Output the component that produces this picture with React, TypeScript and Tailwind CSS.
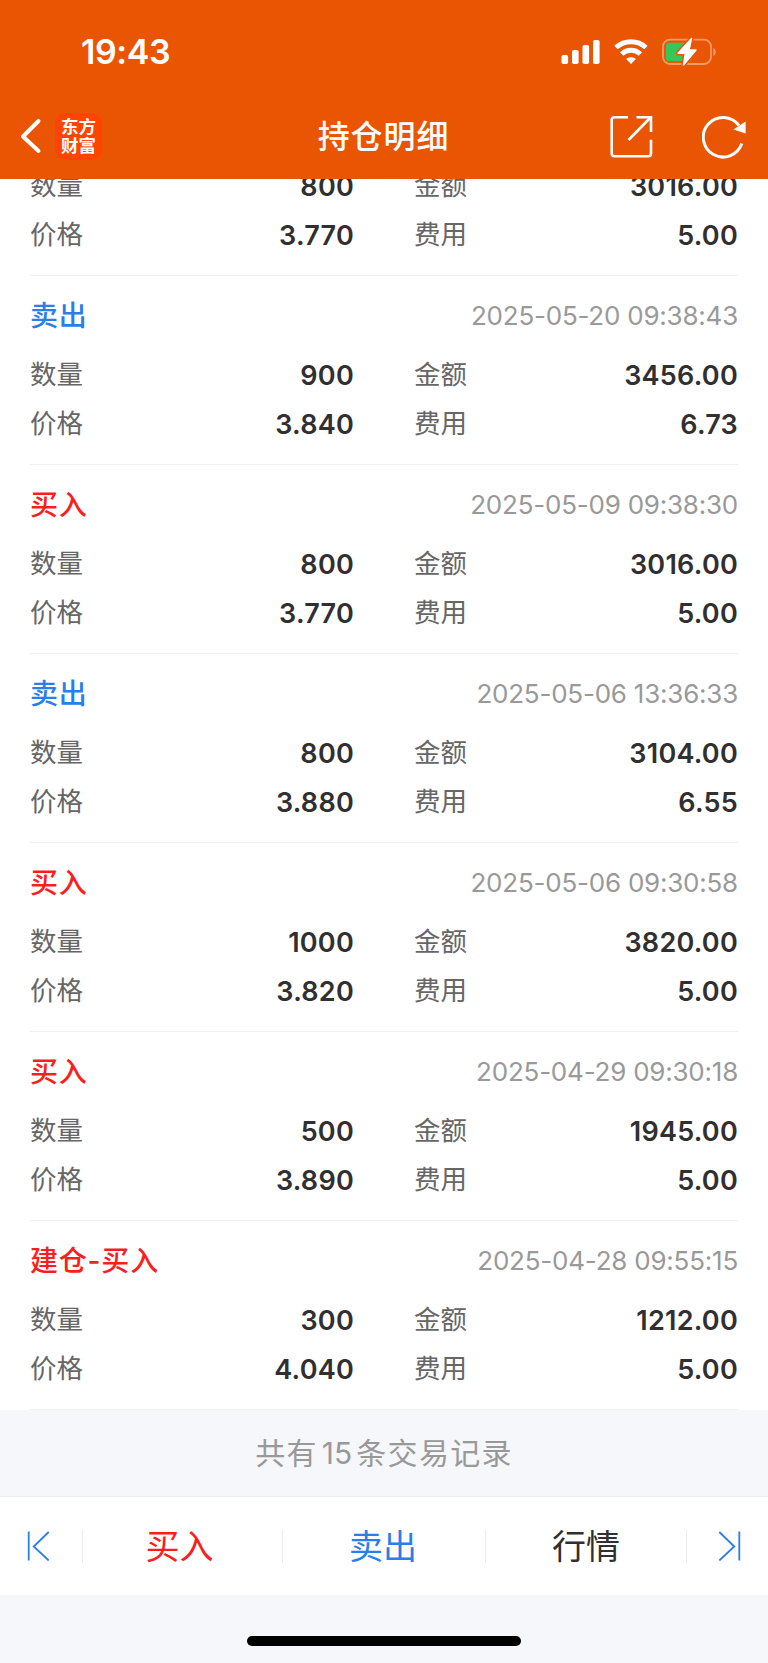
import React from "react";

type TradeRecord = {
  type: string;
  side: "buy" | "sell";
  time: string;
  quantity: string;
  amount: string;
  price: string;
  fee: string;
};

const records: TradeRecord[] = [
  { type: "卖出", side: "sell", time: "2025-05-20 09:38:43", quantity: "900", amount: "3456.00", price: "3.840", fee: "6.73" },
  { type: "买入", side: "buy", time: "2025-05-09 09:38:30", quantity: "800", amount: "3016.00", price: "3.770", fee: "5.00" },
  { type: "卖出", side: "sell", time: "2025-05-06 13:36:33", quantity: "800", amount: "3104.00", price: "3.880", fee: "6.55" },
  { type: "买入", side: "buy", time: "2025-05-06 09:30:58", quantity: "1000", amount: "3820.00", price: "3.820", fee: "5.00" },
  { type: "买入", side: "buy", time: "2025-04-29 09:30:18", quantity: "500", amount: "1945.00", price: "3.890", fee: "5.00" },
  { type: "建仓-买入", side: "buy", time: "2025-04-28 09:55:15", quantity: "300", amount: "1212.00", price: "4.040", fee: "5.00" },
];

function StatusBar() {
  return (
    <div className="flex h-[102px] items-center justify-between pl-[81px] pr-[51px] pt-px">
      <span className="pt-px text-[34px] font-semibold leading-none tracking-[-0.4px]">19:43</span>
      <div className="flex items-center">
        <svg width="39" height="26" viewBox="0 0 39 26" fill="#fff">
          <rect x="0.5" y="16" width="6.6" height="9" rx="1.8" />
          <rect x="11" y="11" width="6.6" height="14" rx="1.8" />
          <rect x="21.5" y="6" width="6.6" height="19" rx="1.8" />
          <rect x="32" y="1" width="6.6" height="24" rx="1.8" />
        </svg>
        <svg className="ml-[14px]" width="34" height="26" viewBox="0 0 34 26" fill="none" stroke="#fff">
          <path d="M2 8.6C10.4 0.8 23.6 0.8 32 8.6" strokeWidth="4.8" />
          <path d="M7.6 15C13 10 21 10 26.4 15" strokeWidth="4.8" />
          <path d="M17 25L12.1 20.1C14.8 17.6 19.2 17.6 21.9 20.1Z" fill="#fff" stroke="none" />
        </svg>
        <svg className="ml-[13px] overflow-visible" width="56" height="28" viewBox="0 0 56 28" fill="none">
          <rect x="2" y="1.6" width="48" height="24.4" rx="7" stroke="#f49b68" strokeWidth="1.8" />
          <path d="M52.3 10C55.5 11.2 55.5 16.8 52.3 18Z" fill="#f49b68" />
          <rect x="4.8" y="4.8" width="26" height="18.2" rx="3.5" fill="#34c759" />
          <path
            d="M30.5 0.5L17 15.2H24.3L22.5 27L35 12H28Z"
            fill="#ea5504"
            stroke="#ea5504"
            strokeWidth="4.4"
            strokeLinejoin="round"
          />
          <path d="M30.5 0.5L17 15.2H24.3L22.5 27L35 12H28Z" fill="#fff" stroke="#fff" strokeWidth="1.4" strokeLinejoin="round" />
        </svg>
      </div>
    </div>
  );
}

function NavBar() {
  return (
    <div className="flex h-[77px] items-center pb-[11px] pl-5 pr-[21px]">
      <div className="flex flex-1 items-center pt-[2px]">
        <svg width="22" height="36" viewBox="0 0 22 36" fill="none" stroke="#fff" strokeWidth="4" strokeLinecap="round" strokeLinejoin="round">
          <path d="M18.5 3L3 18.5L18.5 33" />
        </svg>
        <div className="ml-[13px] flex h-[47px] w-[47px] flex-col items-center justify-center rounded-[10px] bg-[#ff4400] text-[17.5px] font-bold leading-[19px]">
          <span>东方</span>
          <span>财富</span>
        </div>
      </div>
      <h1 className="pt-1 text-[32px] font-medium leading-none tracking-[0.9px]">持仓明细</h1>
      <div className="flex flex-1 items-center justify-end pt-[3px]">
        <svg width="44" height="44" viewBox="0 0 44 44" fill="none" stroke="#fff" strokeWidth="2.6">
          <path d="M18 2.2H4.5Q1.7 2.2 1.7 4.7V38.5Q1.7 41.2 4.5 41.2H38.5Q41 41.2 41 38.5V24.8" />
          <path d="M26.5 2.2H41V17" />
          <path d="M40.5 2.5L18.5 25" />
        </svg>
        <svg className="ml-[48px]" width="45" height="44" viewBox="0 0 45 44" fill="none">
          <path d="M39.8 28.6A19.8 19.8 0 1 1 37 10.5" stroke="#fff" strokeWidth="3" />
          <path d="M43.6 6.5V18.5L31.5 14.5Z" fill="#fff" />
        </svg>
      </div>
    </div>
  );
}

function Field({ label, value }: { label: string; value: string }) {
  return (
    <div className="flex h-[49px] items-center justify-between">
      <span className="text-[26.5px] text-[#666666]">{label}</span>
      <span className="pt-[3px] text-[27px] font-semibold tracking-[0.25px] text-[#303030]">{value}</span>
    </div>
  );
}

function Fields({ record }: { record: Pick<TradeRecord, "quantity" | "amount" | "price" | "fee"> }) {
  return (
    <div className="grid shrink-0 grid-cols-2 gap-x-[60px]">
      <Field label="数量" value={record.quantity} />
      <Field label="金额" value={record.amount} />
      <Field label="价格" value={record.price} />
      <Field label="费用" value={record.fee} />
    </div>
  );
}

function RecordItem({ record }: { record: TradeRecord }) {
  return (
    <div className="h-[189px] border-b border-[#f0f0f0] pt-4">
      <div className="mb-[10px] flex h-12 items-center justify-between">
        <span className={`text-[28px] font-medium tracking-[0.8px] ${record.side === "buy" ? "text-[#fa1e1e]" : "text-[#2b7de9]"}`}>
          {record.type}
        </span>
        <span className="pb-[2px] text-[26px] tracking-[-0.22px] text-[#999999]">{record.time}</span>
      </div>
      <Fields record={record} />
    </div>
  );
}

function Divider() {
  return <div className="h-[33px] w-px bg-[#ebebeb]" />;
}

function TabBar() {
  return (
    <div className="flex h-[99px] items-center border-t border-[#eeeeee] bg-white text-[34px]">
      <button className="flex w-[82px] items-center pl-[27px]">
        <svg width="24" height="30" viewBox="0 0 24 30" fill="none" stroke="#2b7de9" strokeWidth="1.8">
          <path d="M1.7 0.5V29.5" />
          <path d="M21.7 1L6.7 15.5L21.7 29.5" />
        </svg>
      </button>
      <Divider />
      <button className="w-[199px] pr-[6px] text-[#fa1e1e]">买入</button>
      <Divider />
      <button className="w-[202px] pr-[2px] text-[#2b7de9]">卖出</button>
      <Divider />
      <button className="w-[200px] text-[#303030]">行情</button>
      <Divider />
      <button className="flex flex-1 items-center justify-end pr-[27px]">
        <svg width="24" height="30" viewBox="0 0 24 30" fill="none" stroke="#2b7de9" strokeWidth="1.8">
          <path d="M22.3 0.5V29.5" />
          <path d="M2.3 1L17.3 15.5L2.3 29.5" />
        </svg>
      </button>
    </div>
  );
}

export default function App() {
  return (
    <div className="flex h-[1663px] w-[768px] flex-col overflow-hidden bg-[#f6f7fa] font-['Inter','Noto_Sans_CJK_SC',sans-serif]">
      <header className="h-[179px] shrink-0 bg-[#ea5504] text-white">
        <StatusBar />
        <NavBar />
      </header>

      <main className="bg-white px-[30px]">
        {/* Record scrolled partly under the header */}
        <div className="flex h-[97px] flex-col justify-end overflow-hidden border-b border-[#f0f0f0] pb-4">
          <Fields record={{ quantity: "800", amount: "3016.00", price: "3.770", fee: "5.00" }} />
        </div>
        {records.map((record) => (
          <RecordItem key={record.time} record={record} />
        ))}
      </main>

      <p className="flex h-[86px] shrink-0 items-center justify-center text-[30px] tracking-[1.3px] text-[#999999]">
        共有<span className="mx-[4px] tracking-normal">15</span>条交易记录
      </p>
      <TabBar />
      <div className="flex flex-1 items-end justify-center pb-[17px]">
        <div className="h-[10px] w-[274px] rounded-full bg-black" />
      </div>
    </div>
  );
}
